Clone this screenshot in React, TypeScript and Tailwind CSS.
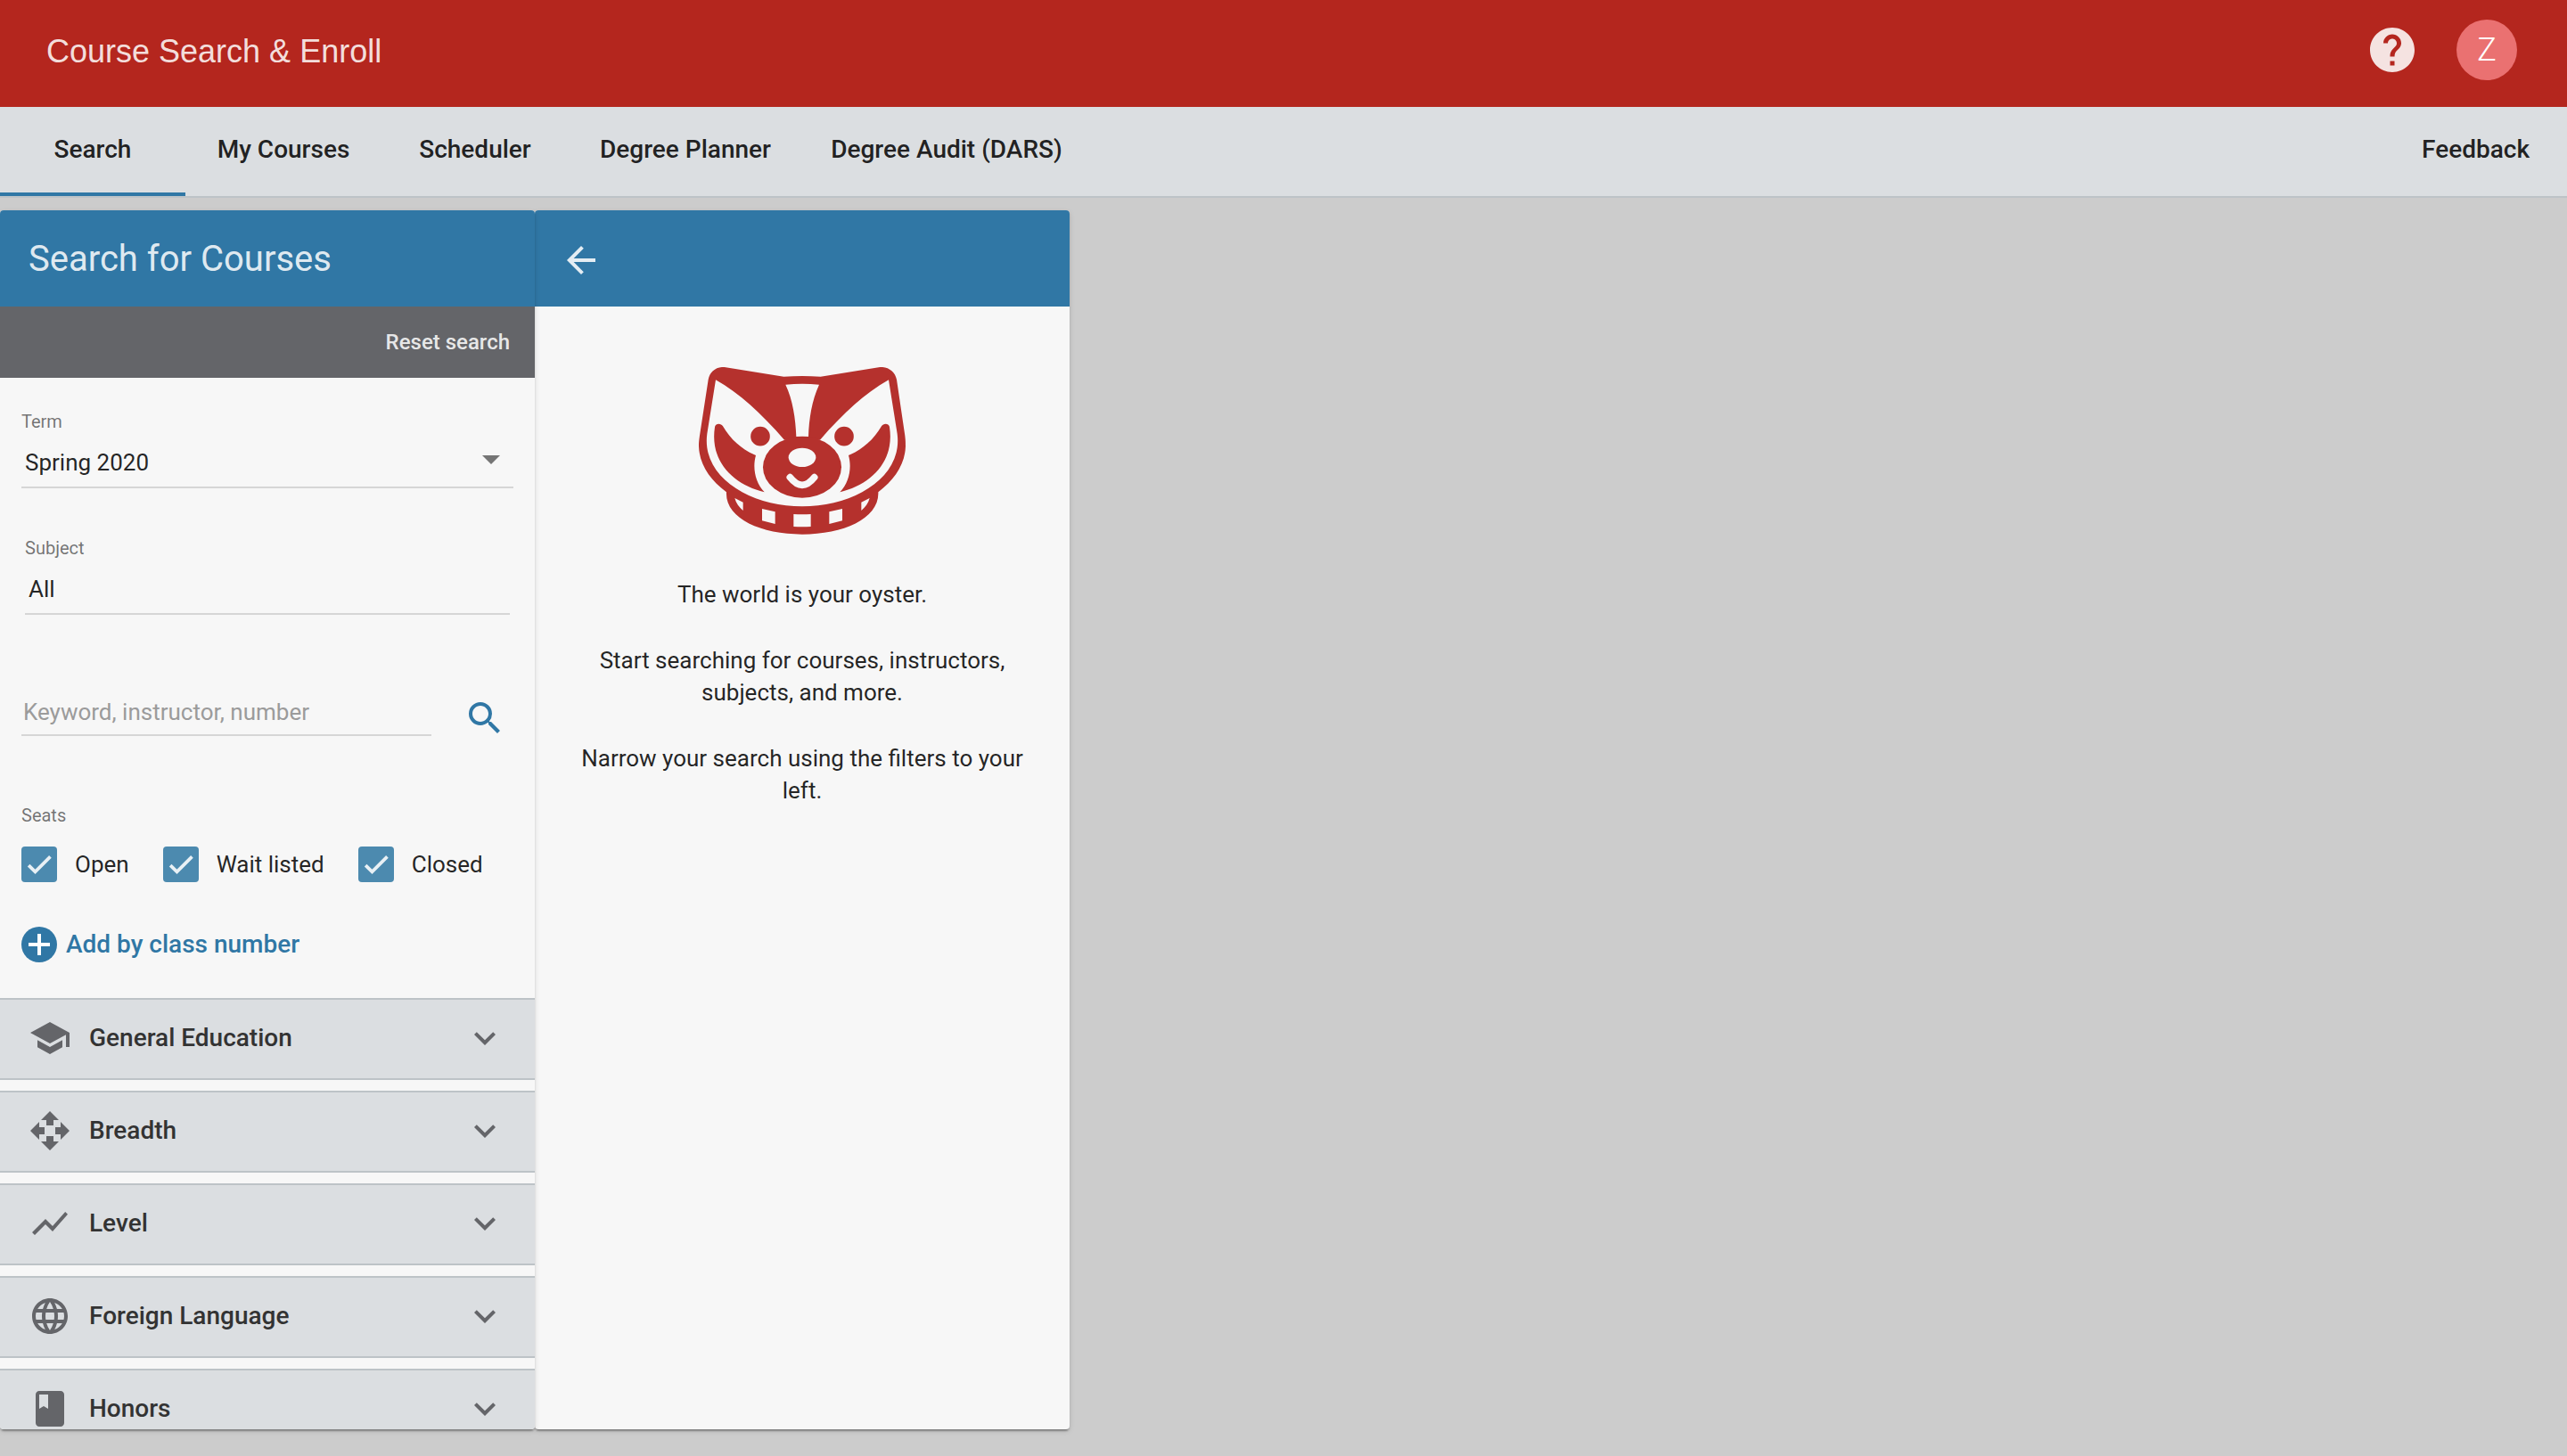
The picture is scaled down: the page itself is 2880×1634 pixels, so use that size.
import type { ReactNode } from 'react';
import {
  MdArrowBack,
  MdClass,
  MdExpandMore,
  MdHelp,
  MdLanguage,
  MdOpenWith,
  MdSchool,
  MdSearch,
  MdShowChart,
} from 'react-icons/md';

const tabs = [
  { label: 'Search', width: 'min-w-[208px]', active: true },
  { label: 'My Courses', width: 'min-w-[220px]', active: false },
  { label: 'Scheduler', width: 'min-w-[210px]', active: false },
  { label: 'Degree Planner', width: 'min-w-[262px]', active: false },
  { label: 'Degree Audit (DARS)', width: 'min-w-[324px]', active: false },
];

const seats = ['Open', 'Wait listed', 'Closed'];

const filters = [
  { label: 'General Education', Icon: MdSchool },
  { label: 'Breadth', Icon: MdOpenWith },
  { label: 'Level', Icon: MdShowChart },
  { label: 'Foreign Language', Icon: MdLanguage },
  { label: 'Honors', Icon: MdClass },
];

function BadgerCheek() {
  return (
    <>
      <path
        fill="#b5312d"
        d="M126 268C126 256 146 252 153 265C180 312 220 345 264 363C252 405 262 455 293 487C190 462 108 385 126 268Z"
      />
      <circle cx="279" cy="299" r="32.5" fill="#b5312d" />
      <path fill="#f7f7f7" d="M285 543L329 553V594L285 583ZM193 507L221 521V549C208 538 197 524 193 507Z" />
    </>
  );
}

function Badger() {
  return (
    <svg viewBox="72 66 696 564" className="h-[188px] w-[232px]" role="img" aria-label="Badger">
      <path
        fill="#b5312d"
        d="M158 66L358 98Q420 94 482 98L682 66C710 64 733 82 738 108L765 290C768 310 768 320 768 332C766 395 730 445 676 487C680 575 560 629 420 629C280 629 160 575 165 487C110 445 74 395 72 332C72 320 73 310 76 290L104 108C109 82 130 64 158 66Z"
      />
      <path
        fill="#f7f7f7"
        d="M129 109C210 155 280 220 360 311H480C560 220 630 155 711 109L740 290C760 440 590 535 420 535C250 535 80 440 100 290Z"
      />
      <ellipse cx="420" cy="403" rx="132" ry="103" fill="#b5312d" />
      <path fill="#f7f7f7" d="M364 125Q420 119 477 125C452 180 443 240 441 300Q420 299 400 300C398 240 388 175 364 125Z" />
      <ellipse cx="420" cy="370" rx="46" ry="32" fill="#f7f7f7" />
      <path d="M379 437Q420 489 461 437" fill="none" stroke="#f7f7f7" strokeWidth="23" strokeLinecap="round" />
      <path fill="#f7f7f7" d="M391 561Q420 563 449 561V603Q420 605 391 603Z" />
      <BadgerCheek />
      <g transform="translate(840 0) scale(-1 1)">
        <BadgerCheek />
      </g>
    </svg>
  );
}

function Header() {
  return (
    <header className="flex h-[120px] shrink-0 items-center bg-[#b4261e] pr-14 pb-2 pl-[52px]">
      <h1 className="pt-1 font-['Liberation_Sans',sans-serif] text-[36px] text-white/87">Course Search &amp; Enroll</h1>
      <button type="button" aria-label="Help" className="mr-[42px] ml-auto text-white/87">
        <MdHelp className="size-[60px]" />
      </button>
      <button
        type="button"
        aria-label="Account"
        className="flex size-[68px] items-center justify-center rounded-full bg-[#ea7171] text-[36px] font-light text-white"
      >
        Z
      </button>
    </header>
  );
}

function Nav() {
  return (
    <nav className="flex h-[102px] shrink-0 border-b-2 border-[#bdc3c7] bg-[#dbdee1] text-[28px] font-medium text-black/87">
      {tabs.map((tab) => (
        <a
          key={tab.label}
          href="#"
          aria-current={tab.active ? 'page' : undefined}
          className={`flex items-center justify-center border-b-4 ${tab.width} ${
            tab.active ? 'border-[#3077a5]' : 'border-transparent'
          }`}
        >
          {tab.label}
        </a>
      ))}
      <a href="#" className="ml-auto flex items-center border-b-4 border-transparent pr-[42px]">
        Feedback
      </a>
    </nav>
  );
}

function Panel({ className = '', children }: { className?: string; children: ReactNode }) {
  return (
    <section
      className={`w-[600px] rounded bg-[#f7f7f7] shadow-[0_4px_2px_-2px_rgba(0,0,0,0.2),0_2px_2px_0_rgba(0,0,0,0.14),0_2px_6px_0_rgba(0,0,0,0.12)] ${className}`}
    >
      <div className="flex h-full flex-col overflow-hidden rounded">{children}</div>
    </section>
  );
}

function SearchForm() {
  return (
    <form className="shrink-0 px-6 pt-9">
      <div className="border-b-2 border-[#d6d6d6] pb-1.5">
        <label htmlFor="term" className="block text-[20px] leading-[26px] text-black/54">
          Term
        </label>
        <div className="relative mt-3">
          <select
            id="term"
            className="block h-[42px] w-full appearance-none bg-transparent pl-1 text-[26px] text-black/87 outline-none"
          >
            <option>Spring 2020</option>
          </select>
          <svg viewBox="0 0 20 10" className="pointer-events-none absolute top-[13px] right-[15px] h-[10px] w-5 fill-[#757575]">
            <path d="M0 0H20L10 10Z" />
          </svg>
        </div>
      </div>
      <div className="mx-1 mt-[54px] border-b-2 border-[#d6d6d6] pb-1.5">
        <label htmlFor="subject" className="block text-[20px] leading-[26px] text-black/54">
          Subject
        </label>
        <input
          id="subject"
          defaultValue="All"
          className="mt-3 block h-[42px] w-full bg-transparent pl-1 text-[26px] text-black/87 outline-none"
        />
      </div>
      <div className="mt-[84px] flex items-start">
        <input
          aria-label="Keyword, instructor, number"
          placeholder="Keyword, instructor, number"
          className="h-[52px] w-[460px] border-b-2 border-[#d6d6d6] bg-transparent pl-0.5 text-[26px] text-black/87 outline-none placeholder:text-[#9b9b9b]"
        />
        <button type="submit" aria-label="Search" className="mt-2 ml-9 text-[#3077a5]">
          <MdSearch className="size-12" />
        </button>
      </div>
      <fieldset className="mt-[72px]">
        <legend className="text-[20px] leading-[26px] text-black/54">Seats</legend>
        <div className="mt-[22px] flex gap-[38px]">
          {seats.map((seat) => (
            <label key={seat} className="flex items-center gap-5 text-[26px] leading-10 text-black/87">
              <span className="relative block size-10">
                <input type="checkbox" defaultChecked className="peer block size-10 appearance-none rounded bg-[#4c8aaf]" />
                <svg
                  viewBox="0 0 24 24"
                  className="pointer-events-none absolute inset-0 m-auto hidden size-9 fill-none stroke-white/87 stroke-[2.5] peer-checked:block"
                >
                  <path d="M4.1 12.7L9 17.6L20.3 6.3" />
                </svg>
              </span>
              {seat}
            </label>
          ))}
        </div>
      </fieldset>
      <button type="button" className="mt-[50px] mb-10 flex h-10 items-center gap-2.5 text-[28px] font-medium text-[#3077a5]">
        <svg viewBox="0 0 40 40" className="size-10">
          <circle cx="20" cy="20" r="20" fill="#3077a5" />
          <path d="M8 20H32M20 8V32" stroke="#fff" strokeWidth="4" />
        </svg>
        Add by class number
      </button>
    </form>
  );
}

function SearchPanel() {
  return (
    <Panel className="relative z-10">
      <h2 className="flex h-[108px] shrink-0 items-center bg-[#3077a5] pt-0.5 pl-8 text-[40px] text-white/87">
        Search for Courses
      </h2>
      <div className="flex h-20 shrink-0 items-center justify-end bg-[#646569] pr-7">
        <button type="button" className="text-[24px] font-medium text-white/87">
          Reset search
        </button>
      </div>
      <SearchForm />
      <div className="flex flex-col gap-3">
        {filters.map(({ label, Icon }) => (
          <button
            key={label}
            type="button"
            aria-expanded="false"
            className="flex h-[92px] shrink-0 items-center border-y-2 border-[#bdc3c7] bg-[#dbdee1] px-8 pb-0.5 text-[28px] font-medium text-[#333]"
          >
            <Icon className="mr-5 size-12 text-[#646569]" />
            {label}
            <MdExpandMore className="ml-auto size-12 text-[#646569]" />
          </button>
        ))}
      </div>
    </Panel>
  );
}

function ResultsPanel() {
  return (
    <Panel>
      <div className="flex h-[108px] shrink-0 items-center bg-[#3077a5] pt-1 pl-7">
        <button type="button" aria-label="Back" className="text-white/87">
          <MdArrowBack className="size-12" />
        </button>
      </div>
      <div className="flex flex-col items-center gap-[38px] px-8 pt-[68px] text-center text-[26px] leading-9 text-black/87">
        <div className="mb-[11px]">
          <Badger />
        </div>
        <p>The world is your oyster.</p>
        <p>Start searching for courses, instructors, subjects, and more.</p>
        <p>Narrow your search using the filters to your left.</p>
      </div>
    </Panel>
  );
}

export default function App() {
  return (
    <div className="flex h-screen flex-col bg-[#ccc] font-[Roboto,sans-serif]">
      <Header />
      <Nav />
      <main className="flex min-h-0 grow pt-[14px] pb-[30px]">
        <SearchPanel />
        <ResultsPanel />
      </main>
    </div>
  );
}
